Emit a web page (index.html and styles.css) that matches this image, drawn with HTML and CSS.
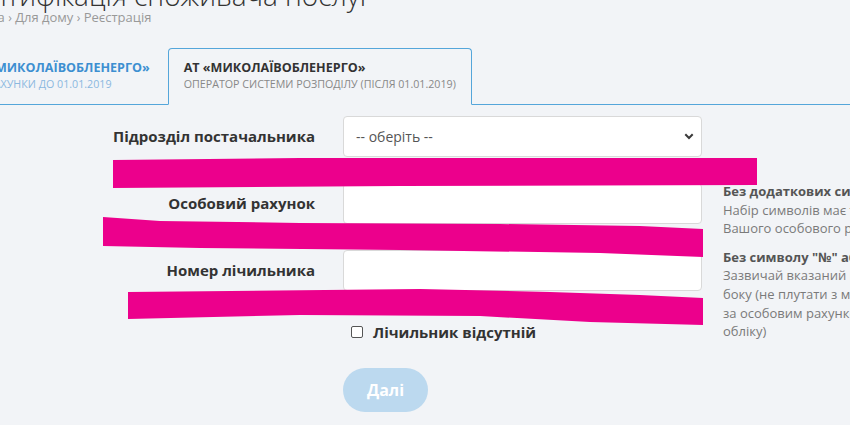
FILE: index.html
```html
<!DOCTYPE html>
<html lang="uk">
<head>
<meta charset="utf-8">
<title>Ідентифікація споживача послуг</title>
<link rel="stylesheet" href="styles.css">
</head>
<body>
<div class="page">
  <h1 class="title">Ідентифікація споживача послуг</h1>
  <div class="crumbs">Головна <span class="sep">›</span> Для дому <span class="sep">›</span> Реєстрація</div>

  <div class="tabs">
    <div class="tab">
      <div class="tab-name">АТ «МИКОЛАЇВОБЛЕНЕРГО»</div>
      <div class="tab-sub">ВСІ РАХУНКИ ДО 01.01.2019</div>
    </div>
    <div class="tab active">
      <div class="tab-name">АТ «МИКОЛАЇВОБЛЕНЕРГО»</div>
      <div class="tab-sub">ОПЕРАТОР СИСТЕМИ РОЗПОДІЛУ (ПІСЛЯ 01.01.2019)</div>
    </div>
  </div>

  <form class="form">
    <label class="lbl">Підрозділ постачальника</label>
    <div class="ctl">
      <div class="select-wrap">
        <select class="field select">
          <option>-- оберіть --</option>
        </select>
        <svg class="chev" width="10" height="7" viewBox="0 0 10 7"><path d="M1.3 1.3 L5 5 L8.7 1.3" fill="none" stroke="#3a3a3a" stroke-width="2"/></svg>
      </div>
      <div class="err"></div>
    </div>

    <label class="lbl">Особовий рахунок</label>
    <div class="ctl">
      <input class="field" type="text">
      <div class="err"></div>
    </div>

    <div class="help">
      <p><b>Без додаткових символів</b><br>Набір символів має точно збігатися<br>Вашого особового рахунку</p>
      <p><b>Без символу "№" або інших знаків</b><br>Зазвичай вказаний на лічильнику з лицьового<br>боку (не плутати з моделлю лічильника) або<br>за особовим рахунком у документах<br>обліку)</p>
    </div>

    <label class="lbl">Номер лічильника</label>
    <div class="ctl">
      <input class="field" type="text">
      <div class="err"></div>
    </div>

    <label class="check">
      <span class="box"></span>
      <span>Лічильник відсутній</span>
    </label>

    <div class="actions">
      <button type="button" class="btn">Далі</button>
    </div>
  </form>
</div>

<svg class="marks" width="850" height="425" viewBox="0 0 850 425">
  <polygon fill="#ec008c" points="113,160 300,158 757,158 757,185 400,186 113,188"/>
  <polygon fill="#ec008c" points="103,217 160,221 300,223 500,224 640,226 703,229 703,257 600,253 400,250 200,248 103,246"/>
  <polygon fill="#ec008c" points="128,292 420,289 550,292 640,295 703,298 703,325 590,322 480,316 300,315 128,319"/>
</svg>
</body>
</html>
```

FILE: styles.css
```css
html, body {
  margin: 0;
  padding: 0;
}
body {
  background: #f2f4f7;
  font-family: "Open Sans", "Liberation Sans", sans-serif;
  color: #333;
  overflow: hidden;
  width: 850px;
  height: 425px;
  position: relative;
}
.page {
  margin-left: -48px;
  width: 1100px;
}
.title {
  margin: -20px 0 0 0;
  font-size: 28px;
  font-weight: 300;
  line-height: 30px;
  color: #333;
  white-space: nowrap;
}
.crumbs {
  font-size: 13px;
  line-height: 14px;
  color: #999;
  white-space: nowrap;
}
.crumbs .sep {
  font-size: 12px;
}
.tabs {
  display: flex;
  margin-top: 23px;
  border-bottom: 1px solid #55a6da;
  width: 950px;
}
.tab {
  padding: 10px 15px 11px;
  border: 1px solid transparent;
  border-bottom: none;
  margin-right: 2px;
  white-space: nowrap;
}
.tab-name {
  font-size: 12.55px;
  font-weight: 700;
  line-height: 17px;
  color: #3d8fd1;
}
.tab-sub {
  font-size: 10.7px;
  line-height: 17px;
  color: #8bb8df;
}
.tab.active {
  border: 1px solid #55a6da;
  border-bottom: 1px solid #f2f4f7;
  border-radius: 4px 4px 0 0;
  margin-bottom: -1px;
  padding-bottom: 10px;
  background: #f2f4f7;
}
.tab.active .tab-name {
  color: #333;
}
.tab.active .tab-sub {
  color: #888;
}
.form {
  margin-top: 11px;
  display: grid;
  grid-template-columns: 363px 360px 300px;
  column-gap: 28px;
  align-items: start;
}
.form > .help {
  margin-left: -8px;
}
.lbl {
  grid-column: 1;
  height: 40px;
  display: flex;
  align-items: center;
  justify-content: flex-end;
  font-size: 15px;
  font-weight: 700;
  color: #333;
  white-space: nowrap;
}
.ctl {
  grid-column: 2;
}
.field {
  box-sizing: border-box;
  display: block;
  width: 359px;
  height: 41px;
  margin: 0;
  border: 1px solid #d9d9d9;
  border-radius: 4px;
  background: #fff;
  font-family: "Open Sans", "Liberation Sans", sans-serif;
  font-size: 14px;
  color: #555;
  padding: 0 12px;
  outline: none;
}
.select-wrap {
  position: relative;
}
.select {
  appearance: none;
  -webkit-appearance: none;
}
.chev {
  position: absolute;
  right: 9px;
  top: 17px;
}
.err {
  height: 26px;
}
.help {
  grid-column: 3;
  grid-row: 2 / span 4;
  margin-top: -1px;
  font-size: 13px;
  line-height: 18.6px;
  color: #7a7a7a;
  white-space: nowrap;
}
.help p {
  margin: 0 0 10px;
}
.help b {
  color: #555;
  font-weight: 700;
}
.check {
  grid-column: 2;
  display: flex;
  align-items: center;
  margin-top: 5px;
  padding-left: 8px;
  height: 20px;
  font-size: 15px;
  font-weight: 700;
  color: #333;
}
.box {
  box-sizing: border-box;
  width: 12px;
  height: 12px;
  border: 1px solid #555;
  border-radius: 2px;
  background: #fff;
  margin-right: 10px;
}
.actions {
  grid-column: 2;
  margin-top: 26px;
}
.btn {
  width: 85px;
  height: 44px;
  border: none;
  border-radius: 22px;
  background: #bcd9ef;
  color: #fff;
  font-family: "Open Sans", "Liberation Sans", sans-serif;
  font-size: 16px;
  font-weight: 700;
  padding: 0;
}
.marks {
  position: absolute;
  left: 0;
  top: 0;
  pointer-events: none;
}
```
